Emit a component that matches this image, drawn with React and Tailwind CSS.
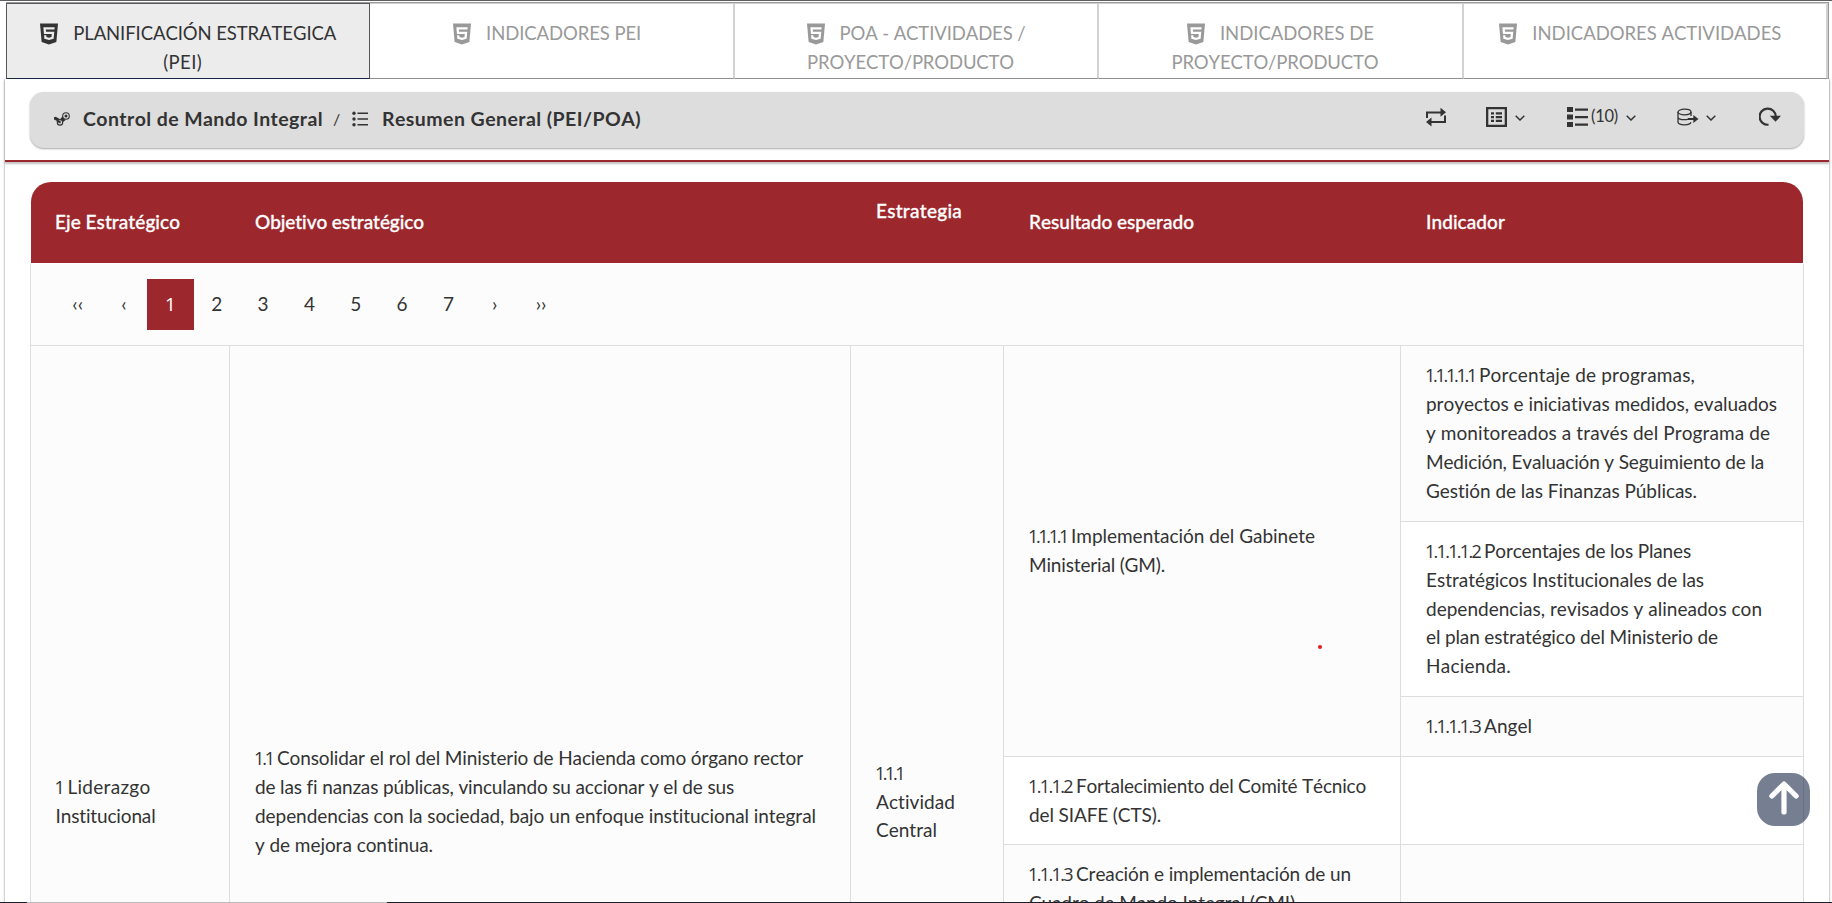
import { useLayoutEffect, useRef, useState } from "react";
import { FaHtml5 } from "react-icons/fa";

// Text that is tracked so that it fills exactly `w` pixels.
function Fit({ w, children, className = "" }) {
  const ref = useRef(null);
  const [spacing, setSpacing] = useState(0);
  useLayoutEffect(() => {
    const measure = () => {
      const el = ref.current;
      if (!el) return;
      el.style.letterSpacing = "0px";
      const natural = el.getBoundingClientRect().width;
      const next = (w - natural) / String(children).length;
      el.style.letterSpacing = next + "px";
      setSpacing(next);
    };
    measure();
    document.fonts?.ready.then(measure);
  }, [w, children]);
  return (
    <span className={"inline-block whitespace-pre " + className} style={{ width: w }}>
      <span ref={ref} className="[font-kerning:none] [font-variant-ligatures:none]" style={{ letterSpacing: spacing }}>
        {children}
      </span>
    </span>
  );
}

function Num({ w, children }) {
  return (
    <Fit w={w} className="-ml-[1px] mr-[4px] font-['Open_Sans',sans-serif] text-[18px]">
      {children}
    </Fit>
  );
}

function Line({ num, nw, w, children }) {
  return (
    <div className="flex items-baseline whitespace-nowrap">
      {num && <Num w={nw}>{num}</Num>}
      <Fit w={w}>{children}</Fit>
    </div>
  );
}

function Tab({ active, lines }) {
  return (
    <div
      className={
        "h-[76px] min-w-0 flex-1 pt-[15px] text-center text-[18.5px] leading-[29px] " +
        (active
          ? "border border-[#58585c] border-b-[#1b2a4a] bg-[#ececec] text-[#333]"
          : "border-r-2 border-t border-b border-r-[#d2d2d2] border-t-[#d2d2d2] border-b-[#999] bg-white text-[#999]")
      }
    >
      <div className={"flex items-center justify-center gap-[15px] " + (lines[1] ? "" : "pr-[9px]")}>
        <FaHtml5 className="h-6 w-[18px]" preserveAspectRatio="none" />
        <Fit w={lines[0][1]} className="text-left">{lines[0][0]}</Fit>
      </div>
      {lines[1] && (
        <div className="pr-[11px]">
          <Fit w={lines[1][1]} className="text-left">{lines[1][0]}</Fit>
        </div>
      )}
    </div>
  );
}

const tabs = [
  [["PLANIFICACIÓN ESTRATEGICA", 263], ["(PEI)", 39]],
  [["INDICADORES PEI", 155]],
  [["POA - ACTIVIDADES /", 186], ["PROYECTO/PRODUCTO", 207]],
  [["INDICADORES DE", 154], ["PROYECTO/PRODUCTO", 207]],
  [["INDICADORES ACTIVIDADES", 249]],
];

function Chevron({ className = "" }) {
  return (
    <svg viewBox="0 0 10 6" className={"h-[6px] w-[10px] " + className} fill="none" stroke="#333" strokeWidth="1.5">
      <path d="M.7 .8 5 5 9.3 .8" />
    </svg>
  );
}

function SteamIcon() {
  return (
    <svg viewBox="0 0 16 14" className="mr-[13px] h-[14px] w-4" fill="none" stroke="currentColor">
      <circle cx="12" cy="4" r="3.300" strokeWidth="1.100" />
      <circle cx="12" cy="4" r="1.500" fill="currentColor" stroke="none" />
      <path d="M0 5.200 1.800 4.800 6.200 7.200 8.400 4.300 9.600 6.600 11.600 8 8.800 10.200 3.600 9.300 0 7.600Z" fill="currentColor" stroke="none" />
      <circle cx="6" cy="10.400" r="2.700" fill="#ddd" strokeWidth="1.100" />
      <path d="M3 8.600 6.600 10.600" strokeWidth="2.200" />
    </svg>
  );
}

function Toolbar() {
  return (
    <div className="mb-[7px] flex items-center text-[#333]">
      <svg viewBox="0 0 22 20" className="mr-[39px] h-5 w-[22px]" fill="none" stroke="currentColor" strokeWidth="2">
        <path d="M2 11V5.500h14M20 8.500v6.500H6" />
        <path d="M15.500 .8v9L21 5.300ZM6.500 10.500v9L1 15Z" fill="currentColor" stroke="none" />
      </svg>
      <svg viewBox="0 0 21 20" className="h-5 w-[21px]">
        <path fillRule="evenodd" d="M0 0h21v20H0ZM2.300 2.300v15.400h16.400V2.300Z" fill="currentColor" />
        <path d="M5 5.200h3v2.200H5ZM5 9h3v2.200H5ZM5 12.800h3V15H5ZM9.800 5.200H16v2.200H9.800ZM9.800 9H16v2.200H9.800ZM9.800 12.800H16V15H9.800Z" fill="currentColor" />
      </svg>
      <Chevron className="mt-[2px] ml-[8px]" />
      <svg viewBox="0 0 21 20" className="ml-[42px] h-5 w-[21px]" fill="currentColor">
        <path d="M0 0h6v5H0ZM0 7.500h6v5H0ZM0 15h6v5H0ZM8 1.500h13v2.300H8ZM8 9h13v2.300H8ZM8 16.500h13v2.300H8Z" />
      </svg>
      <Fit w={27} className="mr-[-1px] mb-[2px] ml-[3px] text-[16.500px] leading-5">(10)</Fit>
      <Chevron className="mt-[2px] ml-[9px]" />
      <svg viewBox="0 0 22 18" className="mt-px ml-[41px] h-[18px] w-[22px]" fill="none" stroke="currentColor" strokeWidth="1.300">
        <ellipse cx="7.500" cy="4" rx="6.500" ry="2.800" />
        <path d="M1 4v10c0 1.700 3 2.800 6.500 2.800s6-.9 6.500-2.500M14 4v4M1 9c0 1.600 3 2.700 6.500 2.700 1.500 0 2.700-.2 3.800-.6" />
        <path d="M11 11h6" strokeWidth="2" />
        <path d="M16.300 7v8L21.500 11Z" fill="currentColor" stroke="none" />
      </svg>
      <Chevron className="mt-[2px] ml-[7px]" />
      <svg viewBox="0 0 22 19" className="ml-[43px] h-[19px] w-[22px]" fill="none" stroke="currentColor" strokeWidth="2.200">
        <path d="M9.500 17.700A8.100 8.100 0 1 1 16.800 9.500" />
        <path d="M10.800 8.800H22L16.500 14.800Z" fill="currentColor" stroke="none" />
      </svg>
    </div>
  );
}

const pages = ["‹‹", "‹", "1", "2", "3", "4", "5", "6", "7", "›", "››"];

export default function App() {
  return (
    <div className="relative flex h-[903px] w-full flex-col overflow-hidden bg-white font-['Lato',sans-serif] text-[19px] leading-[28.900px] text-[#333]">
      <div className="h-px shrink-0 bg-[#5f5c60]" />
      <nav className="mt-px mr-[3px] ml-[6px] flex h-[77px] shrink-0 border-t border-r border-[#999]">
        {tabs.map((t, i) => (
          <Tab key={i} active={i === 0} lines={t} />
        ))}
      </nav>
      <main className="mr-[2px] ml-[4px] h-[1200px] shrink-0 border-x border-[#d4d4d4] shadow-[0_0_2px_rgba(0,0,0,0.15)]">
        <div className="border-b-2 border-[#9c272d] px-[25px] pt-[13px] pb-[12px] shadow-[0_2px_2px_rgba(0,0,0,0.25)]">
          <div className="flex h-[56px] items-center justify-between rounded-[14px] bg-[#ddd] pr-[23px] pl-[24px] shadow-[0_1px_2px_rgba(0,0,0,0.35)]">
            <div className="mb-[2px] flex items-center text-[19.500px] font-bold">
              <SteamIcon />
              <Fit w={240}>Control de Mando Integral</Fit>
              <span className="mx-[10px] w-[7px] text-[16px] font-normal">/</span>
              <svg viewBox="0 0 16 16" className="mr-[14px] ml-[2px] size-4" fill="currentColor">
                <circle cx="2" cy="2.300" r="1.700" />
                <circle cx="2" cy="8" r="1.700" />
                <circle cx="2" cy="13.700" r="1.700" />
                <path d="M5.500 1.600H16V3H5.500ZM5.500 7.300H16v1.400H5.500ZM5.500 13H16v1.400H5.500Z" />
              </svg>
              <Fit w={259}>Resumen General (PEI/POA)</Fit>
            </div>
            <Toolbar />
          </div>
        </div>

        <section className="mx-[25px] mt-[20px] grid grid-cols-[200px_621px_153px_397px_403px]">
          <header className="col-span-5 mx-px grid h-[81px] grid-cols-subgrid items-center rounded-t-[20px] bg-[#9c272d] font-medium text-white [-webkit-text-stroke:0.300px_white]">
            <div className="pl-[24px]"><Fit w={125}>Eje Estratégico</Fit></div>
            <div className="pl-[25px]"><Fit w={169}>Objetivo estratégico</Fit></div>
            <div className="pb-[22px] pl-[25px]"><Fit w={86}>Estrategia</Fit></div>
            <div className="pl-[25px]"><Fit w={165}>Resultado esperado</Fit></div>
            <div className="pl-[25px]"><Fit w={79}>Indicador</Fit></div>
          </header>

          <div className="col-span-5 mt-px flex h-[82px] items-center border-x border-b border-[#ddd] bg-[#fcfcfc] pl-[23.500px]">
            {pages.map((p) => (
              <div
                key={p}
                className={
                  "flex h-[51px] w-[46.350px] items-center justify-center " +
                  (p === "1" ? "bg-[#9c272d] font-['Open_Sans',sans-serif] text-white" : "")
                }
              >
                {p}
              </div>
            ))}
          </div>

          <div className="flex h-[912px] flex-col justify-center border-x border-[#ddd] bg-[#fcfcfc] pl-[24.500px]">
            <Line num="1" nw={9} w={83}>Liderazgo</Line>
            <Line w={100}>Institucional</Line>
          </div>
          <div className="flex h-[912px] flex-col justify-center border-r border-[#ddd] bg-[#fcfcfc] pl-[25px]">
            <Line num="1.1" nw={19} w={526}>Consolidar el rol del Ministerio de Hacienda como órgano rector</Line>
            <Line w={479}>de las fi nanzas públicas, vinculando su accionar y el de sus</Line>
            <Line w={561}>dependencias con la sociedad, bajo un enfoque institucional integral</Line>
            <Line w={178}>y de mejora continua.</Line>
          </div>
          <div className="flex h-[912px] flex-col justify-center border-r border-[#ddd] bg-[#fcfcfc] pl-[25px]">
            <div className="flex"><Num w={28}>1.1.1</Num></div>
            <Line w={79}>Actividad</Line>
            <Line w={61}>Central</Line>
          </div>
          <div className="flex flex-col">
            <div className="flex h-[411px] flex-col justify-center border-r border-b border-[#ddd] bg-[#fcfcfc] pl-[25px]">
              <Line num="1.1.1.1" nw={39} w={244}>Implementación del Gabinete</Line>
              <Line w={136}>Ministerial (GM).</Line>
            </div>
            <div className="flex h-[88px] flex-col justify-center border-r border-b border-[#ddd] bg-white pl-[25px]">
              <Line num="1.1.1.2" nw={44} w={290}>Fortalecimiento del Comité Técnico</Line>
              <Line w={132}>del SIAFE (CTS).</Line>
            </div>
            <div className="h-[413px] border-r border-[#ddd] bg-[#fcfcfc] pt-[15px] pl-[25px]">
              <Line num="1.1.1.3" nw={44} w={275}>Creación e implementación de un</Line>
              <Line w={266}>Cuadro de Mando Integral (CMI)</Line>
            </div>
          </div>
          <div className="flex flex-col border-r border-[#ddd]">
            <div className="flex h-[176px] flex-col justify-center border-b border-[#ddd] bg-[#fcfcfc] pl-[25px]">
              <Line num="1.1.1.1.1" nw={50} w={216}>Porcentaje de programas,</Line>
              <Line w={351}>proyectos e iniciativas medidos, evaluados</Line>
              <Line w={344}>y monitoreados a través del Programa de</Line>
              <Line w={338}>Medición, Evaluación y Seguimiento de la</Line>
              <Line w={271}>Gestión de las Finanzas Públicas.</Line>
            </div>
            <div className="flex h-[175px] flex-col justify-center border-b border-[#ddd] bg-white pl-[25px]">
              <Line num="1.1.1.1.2" nw={55} w={207}>Porcentajes de los Planes</Line>
              <Line w={278}>Estratégicos Institucionales de las</Line>
              <Line w={336}>dependencias, revisados y alineados con</Line>
              <Line w={292}>el plan estratégico del Ministerio de</Line>
              <Line w={85}>Hacienda.</Line>
            </div>
            <div className="flex h-[60px] flex-col justify-center border-b border-[#ddd] bg-[#fcfcfc] pl-[25px]">
              <Line num="1.1.1.1.3" nw={55} w={48}>Angel</Line>
            </div>
            <div className="h-[88px] border-b border-[#ddd] bg-white" />
            <div className="h-[413px] bg-[#fcfcfc]" />
          </div>
        </section>
      </main>

      <span className="absolute top-[645px] left-[1318px] size-1 rounded-full bg-[#e8191c]" />
      <button aria-label="Subir" className="absolute top-[773px] left-[1757px] flex size-[53px] items-center justify-center rounded-[18px] bg-[#1b2a4a]/60">
        <svg viewBox="0 0 30 34" className="mb-[4px] h-[34px] w-[30px]" fill="none" stroke="#fff" strokeWidth="5.200" strokeLinecap="round" strokeLinejoin="round">
          <path d="M15 31V4M2.900 15 15 3 27.100 15" />
        </svg>
      </button>
      <div className="absolute bottom-0 left-0 flex h-px w-full bg-[#1a1f2b]">
        <div className="ml-[27px] w-[360px] bg-[#bbb]" />
      </div>
    </div>
  );
}
